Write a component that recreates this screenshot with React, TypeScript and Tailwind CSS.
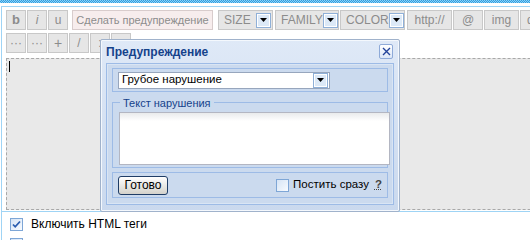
import React from "react";

const font = { fontFamily: '"Liberation Sans", Arial, sans-serif' };

function Arrow() {
  return (
    <span className="flex h-[15px] w-[15px] shrink-0 items-center justify-center border border-[#8fb0d8] bg-[#dce9f7] shadow-[inset_0_0_0_1px_#fff]">
      <svg width="7" height="4" viewBox="0 0 7 4">
        <path d="M0 0h7L3.5 4z" fill="#000" />
      </svg>
    </span>
  );
}

function Btn({ label, w = "w-[20px]", cls = "" }: { label: string; w?: string; cls?: string }) {
  return (
    <div
      className={`flex h-[20px] shrink-0 items-center justify-center whitespace-nowrap border border-[#c8c8c8] bg-[#e6e6e6] text-[12px] text-[#8c8c8c] ${w} ${cls}`}
    >
      {label}
    </div>
  );
}

function Drop({ label, w, cls = "" }: { label: string; w: string; cls?: string }) {
  return (
    <div
      className={`flex h-[20px] shrink-0 items-center justify-between border border-[#c8c8c8] bg-[#e6e6e6] pl-[5px] pr-[1px] text-[12px] text-[#8c8c8c] ${w} ${cls}`}
    >
      <span>{label}</span>
      <Arrow />
    </div>
  );
}

function CheckBox({ checked }: { checked?: boolean }) {
  return (
    <span className="relative flex h-[13px] w-[13px] shrink-0 items-center justify-center border border-[#7ea6d6] bg-gradient-to-br from-[#d6e4f5] to-[#f8fbff]">
      {checked && (
        <svg width="9" height="9" viewBox="0 0 9 9">
          <path d="M1 4.5l2.2 2.3L8 1.5" stroke="#2a5db0" strokeWidth="1.8" fill="none" />
        </svg>
      )}
    </span>
  );
}

export default function App() {
  return (
    <div className="relative h-[240px] w-[530px] overflow-hidden bg-white" style={font}>
      <div className="h-[3px] bg-[repeating-conic-gradient(#2e9fe2_0_25%,#8fd0f5_0_50%)] bg-[length:2px_2px]" />
      <div className="mt-[3px] ml-[1px] w-[640px] border-l border-t border-[#9fd4f5]">
        <div className="pl-[4px] pt-[3px]">
          <div className="flex items-center gap-[1px]">
            <Btn label="b" cls="font-bold text-[13px]" />
            <Btn label="i" cls="italic" />
            <Btn label="u" />
            <div className="ml-[3px] flex h-[20px] w-[141px] shrink-0 items-center justify-center whitespace-nowrap border border-[#d8cccc] bg-[#f7eded] text-[11px] text-[#8c8c8c]">
              Сделать предупреждение
            </div>
            <Drop label="SIZE" w="w-[55px]" cls="ml-[4px]" />
            <Drop label="FAMILY" w="w-[64px]" cls="ml-[1px]" />
            <Drop label="COLOR" w="w-[65px]" />
            <Btn label="http://" w="w-[45px]" cls="ml-[1px]" />
            <Btn label="@" w="w-[30px]" />
            <Btn label="img" w="w-[35px]" />
            <Btn label="quote" w="w-[44px]" />
          </div>
          <div className="mt-[3px] flex items-center gap-[1px]">
            <Btn label="···" />
            <Btn label="···" />
            <Btn label="+" cls="text-[14px]" />
            <Btn label="/" />
            <Btn label=":" />
            <Btn label="" />
          </div>
          <div className="mt-[5px] h-[152px] border border-dashed border-[#a8a8a8] bg-[#e9e9e9] p-[2px]">
            <div className="h-[11px] w-[1px] bg-black" />
          </div>
        </div>
        <div className="mt-[1px] border-t border-[#9fd4f5] pl-[8px] pt-[3px]">
          <div className="flex items-center gap-[8px] text-[12px] text-black">
            <CheckBox checked />
            <span>Включить HTML теги</span>
          </div>
          <div className="mt-[5px] flex items-center">
            <CheckBox />
          </div>
        </div>
      </div>

      {/* popup */}
      <div className="absolute left-[100px] top-[39px] flex h-[173px] w-[300px] flex-col rounded-[2px] border border-[#a0b2cb] bg-gradient-to-b from-[#dfe9f7] to-[#cad9ee] shadow-[inset_0_0_0_1px_#f4f8fd]">
        <div className="flex h-[23px] items-center justify-between pl-[5px] pr-[6px]">
          <span className="text-[12px] font-bold text-[#15428b]">Предупреждение</span>
          <span className="flex h-[15px] w-[14px] items-center justify-center rounded-[2px] border border-[#8eaad8] bg-gradient-to-b from-[#ffffff] to-[#dbe7f7]">
            <svg width="9" height="9" viewBox="0 0 9 9">
              <path d="M1 1l7 7M8 1l-7 7" stroke="#23439a" strokeWidth="1.4" />
            </svg>
          </span>
        </div>
        <div className="mx-[5px] flex flex-1 flex-col gap-[4px] border border-[#9dbbe6] bg-[#cbdaee] px-[5px] pb-[6px] pt-[4px] shadow-[inset_0_0_0_1px_#d9e5f4]">
          <div className="flex h-[24px] items-center border border-[#9dbbe6] pl-[5px]">
            <div className="flex h-[17px] w-[212px] items-center justify-between border border-[#97a6bd] bg-white pl-[3px] pr-[1px] text-[11.5px] text-black">
              <span>Грубое нарушение</span>
              <Arrow />
            </div>
          </div>
          <div className="relative mt-[6px] h-[66px] border border-[#9dbbe6] pl-[6px] pt-[9px]">
            <span className="absolute left-[7px] top-[-8px] bg-[#cbdaee] px-[3px] text-[11px] text-[#15428b]">
              Текст нарушения
            </span>
            <div className="h-[53px] w-[271px] border border-[#b3b6c2] bg-white bg-gradient-to-b from-[#e9ebec] to-[#ffffff] bg-[length:100%_8px] bg-no-repeat" />
          </div>
          <div className="flex h-[26px] items-center justify-between border border-[#9dbbe6] pl-[5px] pr-[5px]">
            <div className="flex h-[19px] w-[50px] items-center justify-center rounded-[3px] border border-[#1f3d66] bg-gradient-to-b from-[#ffffff] to-[#d4d2cb] text-[12px] text-black">
              Готово
            </div>
            <div className="flex items-center gap-[4px] text-[11.5px] text-black">
              <CheckBox />
              <span>Постить сразу</span>
              <span className="ml-[2px] font-bold text-[#444] underline decoration-dotted">?</span>
            </div>
          </div>
        </div>
        <div className="h-[6px]" />
      </div>
    </div>
  );
}
